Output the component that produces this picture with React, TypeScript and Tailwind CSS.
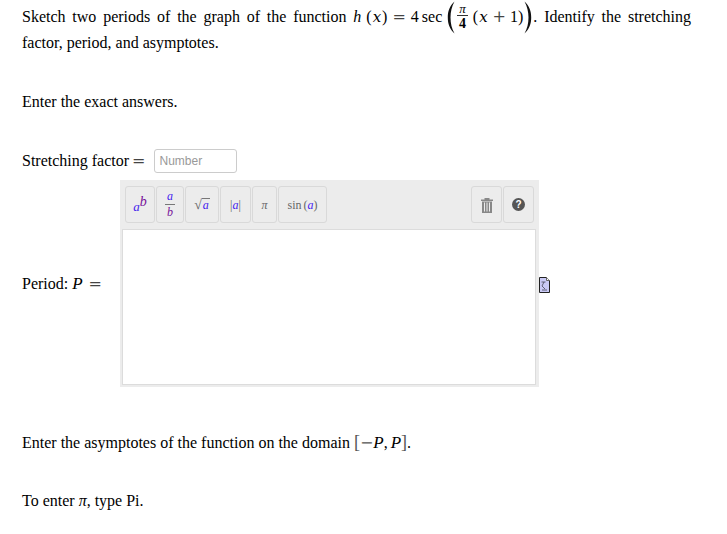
import React from "react"

const Var = ({ children, className = "" }: { children: React.ReactNode; className?: string }) => (
  <i className={className}>{children}</i>
)

const Equals = ({ className = "" }: { className?: string }) => (
  <span className={`text-[#444] [font-family:'DejaVu_Serif',serif] ${className}`}>=</span>
)

const BigParen = ({ flip = false }: { flip?: boolean }) => (
  <svg width="9" height="33" viewBox="0 0 9 33" className={`-my-[8px] shrink-0 ${flip ? "-scale-x-100" : ""}`}>
    <path d="M7.500 .5C2.500 5 .8 10.500 .8 16.500S2.500 28 7.500 32.500C4.800 27.500 3.500 22.500 3.500 16.500S4.800 5.500 7.500 .5z" fill="#111" />
  </svg>
)

const ToolButton = ({ className, children }: { className: string; children: React.ReactNode }) => (
  <div className={`h-[37px] flex items-center justify-center bg-[#ececec] border border-[#d9d9d9] rounded-[3px] text-[#666] text-[12px] ${className}`}>
    {children}
  </div>
)

const App: React.FC = () => {
  return (
    <div className="w-[727px] h-[534px] overflow-hidden bg-white text-black text-[16px] leading-[18px] pl-[22px] pr-[36px] [font-family:'Liberation_Serif',serif]">
      {/* Question text */}
      <div className="h-[34px] pt-[8px] text-justify [text-align-last:justify]">
        Sketch two periods of the graph of the function{" "}
        <span className="whitespace-nowrap">
          <Var>h</Var>
          <span className="ml-[5px]">(</span>
          <Var className="text-[15px] px-[1px] [font-family:'DejaVu_Serif',serif]">x</Var>)
          <Equals className="mx-[5px]" />4<span className="ml-[3px]">sec</span>
          <span className="inline-flex items-center h-[18px] align-top">
            <span className="ml-[5px] flex">
              <BigParen />
            </span>
            <span className="inline-flex flex-col items-center -mt-[1px] mx-[1px]">
              <Var className="border-b border-[#333] px-[2px] text-[13px] leading-[13px]">π</Var>
              <span className="text-[14px] leading-[15px] font-bold">4</span>
            </span>
            <span className="ml-[4px]">(</span>
            <Var className="text-[15px] px-[1px] [font-family:'DejaVu_Serif',serif]">x</Var>
            <span className="mx-[4px] [font-family:'DejaVu_Serif',serif] text-[#444]">+</span>1)
            <BigParen flip />
          </span>
          <span className="ml-[1px]">.</span>
        </span>{" "}
        Identify the stretching
      </div>
      <p className="h-[18px]">factor, period, and asymptotes.</p>
      <p className="mt-[41px] h-[18px]">Enter the exact answers.</p>

      {/* Stretching factor */}
      <div className="mt-[38px] h-[24px] flex items-center">
        <span>Stretching factor</span>
        <Equals className="ml-[3px]" />
        <div className="ml-[9px] w-[83px] h-[24px] border border-[#ccc] rounded-[3px] flex items-center pl-[4px] text-[12px] text-[#999] [font-family:'Liberation_Sans',sans-serif]">
          Number
        </div>
      </div>

      {/* Period row with editor */}
      <div className="mt-[7px] flex items-center">
        <div className="w-[98px] whitespace-nowrap">
          Period: <Var className="text-[17px] mr-[2px]">P</Var> <Equals />
        </div>
        <div className="w-[419px] h-[207px] bg-[#ececec] flex flex-col pt-[6px] px-[2px] pb-[2px]">
          <div className="flex pl-[3px] pr-[3px] gap-[1px]">
            <ToolButton className="w-[30px]">
              <span className="text-[#4422ee] italic text-[13px] mt-[4px]">
                a<sup className="text-[14px] text-[#771199] -top-[5px] relative align-baseline">b</sup>
              </span>
            </ToolButton>
            <ToolButton className="w-[28px]">
              <span className="flex flex-col items-center leading-[15px] italic">
                <span className="text-[#4422ee] border-b border-[#777] px-[2px]">a</span>
                <span className="text-[#771199]">b</span>
              </span>
            </ToolButton>
            <ToolButton className="w-[34px]">
              <span className="text-[14px] mt-[1px]">√</span>
              <span className="text-[#4422ee] italic border-t border-[#777] leading-[12px] px-[1px]">a</span>
            </ToolButton>
            <ToolButton className="w-[31px]">
              |<span className="text-[#4422ee] italic">a</span>|
            </ToolButton>
            <ToolButton className="w-[25px]">
              <i>π</i>
            </ToolButton>
            <ToolButton className="w-[49px]">
              <span>sin</span>
              <span className="ml-[2px]">(</span>
              <span className="text-[#4422ee] italic">a</span>)
            </ToolButton>
            <div className="flex-1" />
            <ToolButton className="w-[31px]">
              <svg width="12" height="15" viewBox="0 0 12 15" fill="#888" className="mt-[1px]">
                <path d="M0 1.500h12V3H0zM3.500 0h5v1.500h-5zM1 3.500h10V15H1z" />
                <path d="M3 4.500h1v9H3zM5.500 4.500h1v9h-1zM8 4.500h1v9H8z" fill="#ececec" />
              </svg>
            </ToolButton>
            <ToolButton className="w-[31px]">
              <span className="w-[13px] h-[13px] rounded-full bg-[#555] text-white text-[10px] font-bold leading-[13px] text-center [font-family:'Liberation_Sans',sans-serif]">
                ?
              </span>
            </ToolButton>
          </div>
          <div className="mt-[6px] flex-1 bg-white border border-[#dcdcdc] mr-[1px]" />
        </div>
        <svg width="11" height="16" viewBox="0 0 11 16" className="mt-[3px]">
          <path d="M.5 .5h7l3 3v12H.5z" fill="#c9c9f5" stroke="#222" />
          <path d="M7.500 .5v3h3" fill="#fff" stroke="#666" />
          <path d="M2.500 5h4M5 5 3 9l3 3M3 13h5" fill="none" stroke="#445" strokeWidth="0.8" />
        </svg>
      </div>

      {/* Footer notes */}
      <p className="mt-[46px] h-[18px] whitespace-nowrap">
        Enter the asymptotes of the function on the domain{" "}
        <span className="text-[#555] text-[18px]">[</span>
        <span className="text-[#555] [font-family:'DejaVu_Serif',serif]">−</span>
        <Var className="text-[17px]">P</Var>
        <span className="mr-[3px]">,</span>
        <Var className="text-[17px]">P</Var>
        <span className="text-[#555] text-[18px]">]</span>.
      </p>
      <p className="mt-[41px] h-[18px]">
        To enter <Var>π</Var>, type Pi.
      </p>
    </div>
  )
}

export default App
